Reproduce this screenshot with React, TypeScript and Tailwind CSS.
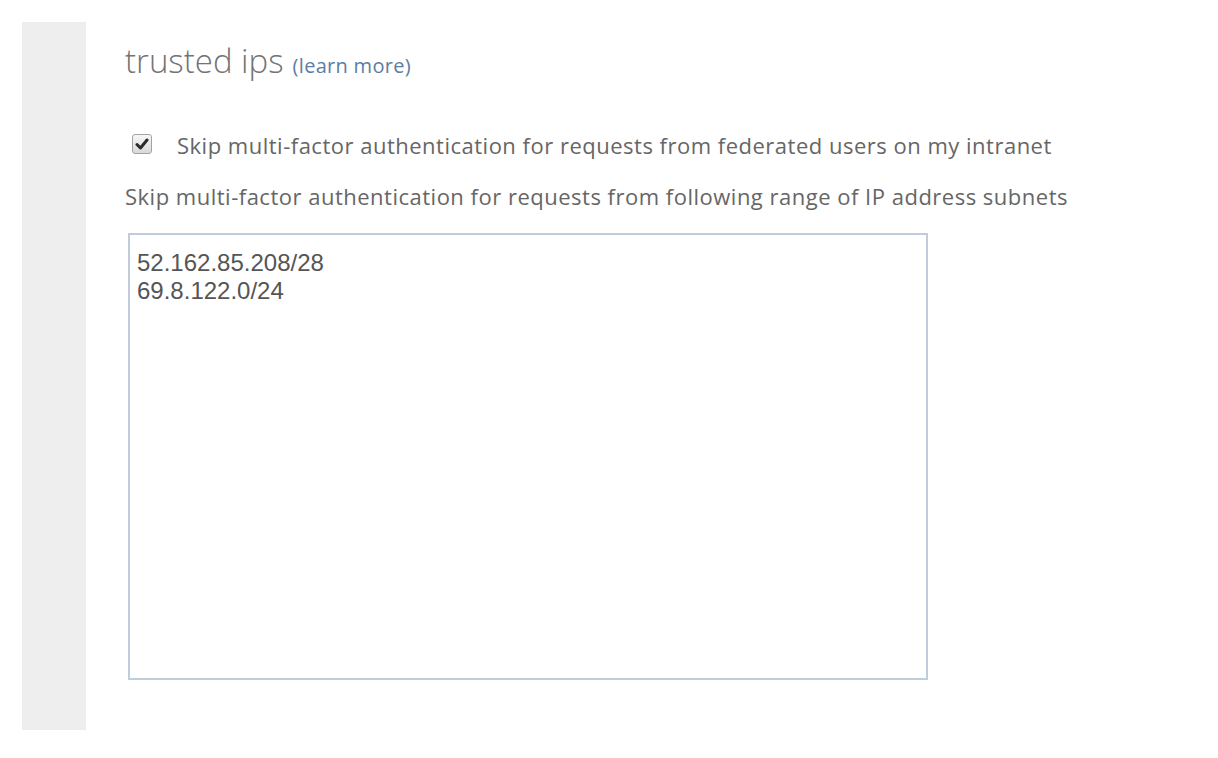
import React, { useState } from 'react';

const App: React.FC = () => {
  const [skipFederated, setSkipFederated] = useState(true);
  const [subnets, setSubnets] = useState('52.162.85.208/28\n69.8.122.0/24');

  return (
    <div className="min-h-screen bg-white pt-[22px] pl-[22px] flex" style={{ fontFamily: '"Open Sans", "Noto Sans", sans-serif' }}>
      <div className="w-[64px] h-[708px] bg-[#eeeeee] shrink-0" />

      <div className="ml-[39px] flex flex-col">
        <h2 className="mt-[19px] h-[40px] flex items-baseline text-[#737373]">
          <span className="text-[33px] font-light leading-[40px]">trusted ips</span>
          <a href="#" className="ml-[9px] text-[20px] leading-none tracking-[0.3px] text-[#5a7ea3]">(learn more)</a>
        </h2>

        {/* federated users checkbox */}
        <label
          className="mt-[49px] ml-[7px] flex items-center text-[22px] leading-[30px] tracking-[0.5px] text-[#666666] cursor-pointer"
          onClick={() => setSkipFederated(!skipFederated)}
        >
          <span className="-mt-[3px] w-[20px] h-[20px] shrink-0 rounded-[3px] border border-[#a3a3a3] bg-gradient-to-b from-[#f7f7f7] to-[#d9d9d9] flex items-center justify-center">
            {skipFederated && (
              <svg width="14" height="12" viewBox="0 0 14 12">
                <path d="M2 6.5 L5.5 10 L12 2" fill="none" stroke="#2b2b2b" strokeWidth="3" strokeLinecap="round" strokeLinejoin="round" />
              </svg>
            )}
          </span>
          <span className="ml-[25px]">Skip multi-factor authentication for requests from federated users on my intranet</span>
        </label>

        <p className="mt-[21px] text-[22px] leading-[30px] tracking-[0.5px] text-[#666666]">
          Skip multi-factor authentication for requests from following range of IP address subnets
        </p>

        <textarea
          value={subnets}
          onChange={(e) => setSubnets(e.target.value)}
          className="mt-[22px] ml-[3px] w-[800px] h-[447px] border-2 border-[#bfcddb] px-[7px] pt-[14px] text-[24px] leading-[28px] text-[#555555] resize-none outline-none"
          style={{ fontFamily: '"Liberation Sans", Arial, sans-serif' }}
        />
      </div>
    </div>
  );
};

export default App;
